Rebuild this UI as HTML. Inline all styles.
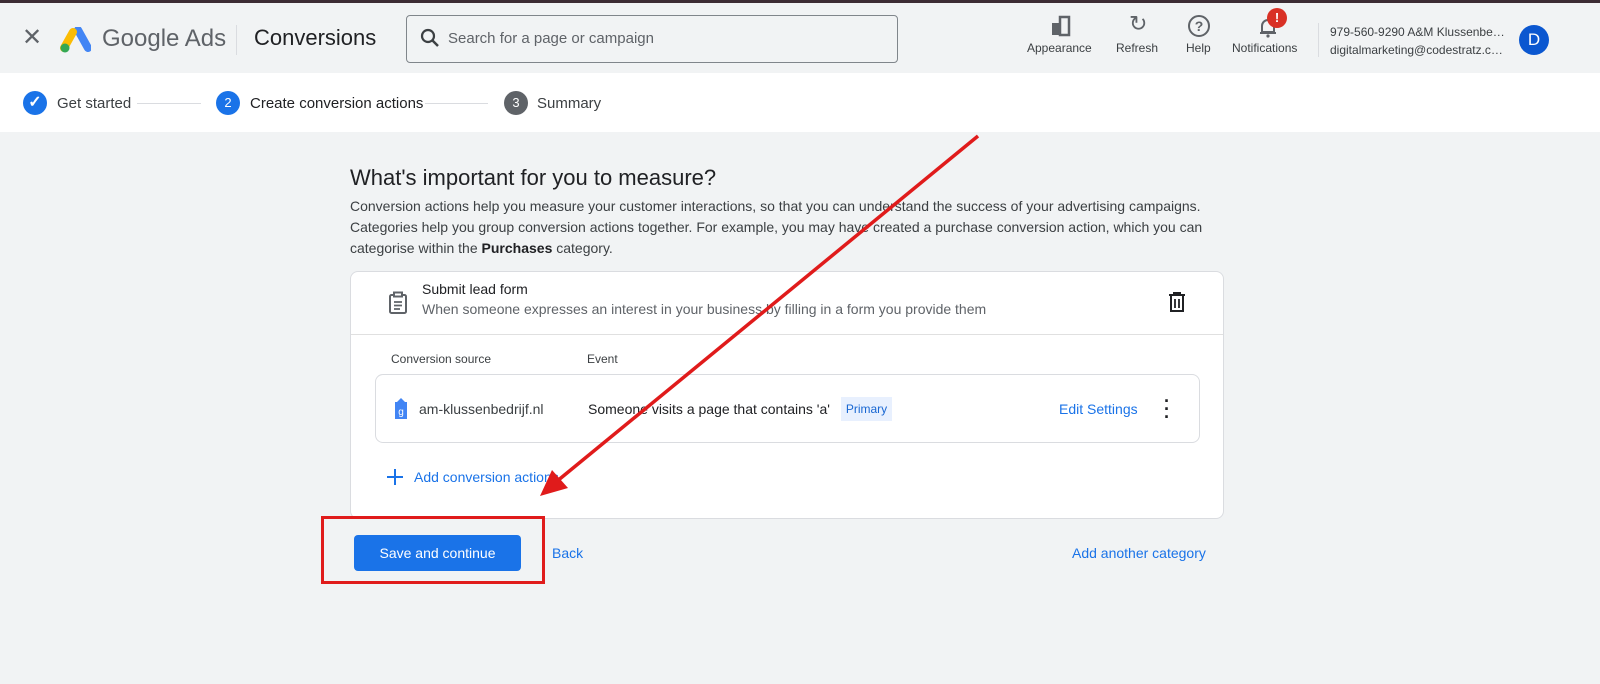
<!DOCTYPE html>
<html><head><meta charset="utf-8"><style>
*{box-sizing:border-box;margin:0;padding:0}
body{width:1600px;height:684px;overflow:hidden;background:#f1f3f4;font-family:"Liberation Sans",Arial,sans-serif;color:#202124;position:relative}
.abs{position:absolute}
.topbar{left:0;top:0;width:1600px;height:3px;background:#3c2c33}
.hdr{left:0;top:3px;width:1600px;height:70px;background:#f1f3f4}
.step{left:0;top:73px;width:1600px;height:59px;background:#fff}
.t{position:absolute;white-space:nowrap}
.hi{font-size:12px;color:#3c4043;text-align:center}
.circ{position:absolute;width:24px;height:24px;border-radius:50%;color:#fff;font-size:13px;text-align:center;line-height:24px}
.card{left:350px;top:271px;width:874px;height:248px;background:#fff;border:1px solid #dadce0;border-radius:8px}
.row{left:375px;top:374px;width:825px;height:69px;border:1px solid #dadce0;border-radius:8px;background:#fff}
.blue{color:#1a73e8}
</style></head><body>
<div class="abs topbar"></div>
<div class="abs hdr">
 <div class="t" style="left:22px;top:20px;font-size:24px;color:#5f6368">✕</div>
 <svg class="abs" style="left:59px;top:24px" width="32" height="28" viewBox="0 0 32 28">
  <path d="M19 3 L29 21" stroke="#4285f4" stroke-width="8" stroke-linecap="round"/>
  <path d="M14 5 L5 21" stroke="#fbbc04" stroke-width="8" stroke-linecap="round"/>
  <circle cx="6" cy="21" r="4.5" fill="#34a853"/>
 </svg>
 <div class="t" style="left:102px;top:22px;font-size:24px;color:#5f6368">Google Ads</div>
 <div class="abs" style="left:236px;top:22px;width:1px;height:30px;background:#dadce0"></div>
 <div class="t" style="left:254px;top:22px;font-size:22px;color:#202124">Conversions</div>
 <div class="abs" style="left:406px;top:12px;width:492px;height:48px;border:1px solid #80868b;border-radius:4px;background:#f1f3f4"></div>
 <svg class="abs" style="left:420px;top:25px" width="20" height="20" viewBox="0 0 20 20"><circle cx="8" cy="8" r="6" stroke="#3c4043" stroke-width="2.2" fill="none"/><path d="M12.5 12.5 L18 18" stroke="#3c4043" stroke-width="2.5"/></svg>
 <div class="t" style="left:448px;top:27px;font-size:15px;color:#5f6368">Search for a page or campaign</div>
 <svg class="abs" style="left:1050px;top:12px" width="22" height="22" viewBox="0 0 22 22"><rect x="2" y="8" width="8" height="12" fill="#5f6368"/><rect x="10" y="2" width="9" height="18" fill="none" stroke="#5f6368" stroke-width="2.5"/></svg>
 <div class="t hi" style="left:1027px;top:38px">Appearance</div>
 <div class="t" style="left:1129px;top:8px;font-size:22px;color:#5f6368">↻</div>
 <div class="t hi" style="left:1116px;top:38px">Refresh</div>
 <div class="abs" style="left:1188px;top:12px;width:22px;height:22px;border:2.2px solid #5f6368;border-radius:50%;font-size:14px;font-weight:bold;color:#5f6368;text-align:center;line-height:18px">?</div>
 <div class="t hi" style="left:1186px;top:38px">Help</div>
 <svg class="abs" style="left:1258px;top:13px" width="20" height="22" viewBox="0 0 20 22"><path d="M4 16 V10 a6 6 0 0 1 12 0 V16 Z" fill="none" stroke="#5f6368" stroke-width="2"/><path d="M2 17 H18" stroke="#5f6368" stroke-width="2"/><circle cx="10" cy="20" r="1.6" fill="#5f6368"/></svg>
 <div class="abs" style="left:1267px;top:5px;width:20px;height:20px;border-radius:50%;background:#d93025;color:#fff;font-size:13px;font-weight:bold;text-align:center;line-height:20px">!</div>
 <div class="t hi" style="left:1232px;top:38px">Notifications</div>
 <div class="abs" style="left:1318px;top:20px;width:1px;height:34px;background:#dadce0"></div>
 <div class="t" style="left:1330px;top:20px;font-size:12px;color:#3c4043;line-height:18px">979-560-9290 A&amp;M Klussenbe…<br>digitalmarketing@codestratz.c…</div>
 <div class="abs" style="left:1519px;top:22px;width:30px;height:30px;border-radius:50%;background:#0b57d0;color:#fff;font-size:17px;text-align:center;line-height:30px">D</div>
</div>
<div class="abs step">
 <div class="circ" style="left:23px;top:18px;background:#1a73e8;font-size:16px;font-weight:bold">✓</div>
 <div class="t" style="left:57px;top:22px;font-size:15px;color:#3c4043">Get started</div>
 <div class="abs" style="left:137px;top:30px;width:64px;height:1px;background:#dadce0"></div>
 <div class="circ" style="left:216px;top:18px;background:#1a73e8">2</div>
 <div class="t" style="left:250px;top:22px;font-size:15px;color:#202124">Create conversion actions</div>
 <div class="abs" style="left:425px;top:30px;width:63px;height:1px;background:#dadce0"></div>
 <div class="circ" style="left:504px;top:18px;background:#5f6368">3</div>
 <div class="t" style="left:537px;top:22px;font-size:15px;color:#3c4043">Summary</div>
</div>
<div class="t" style="left:350px;top:165px;font-size:22px;color:#202124">What's important for you to measure?</div>
<div class="t" style="left:350px;top:196px;font-size:14px;color:#3c4043;line-height:21px">Conversion actions help you measure your customer interactions, so that you can understand the success of your advertising campaigns.<br>Categories help you group conversion actions together. For example, you may have created a purchase conversion action, which you can<br>categorise within the <b style="color:#202124">Purchases</b> category.</div>
<div class="abs card">
 <svg class="abs" style="left:36px;top:19px" width="22" height="24" viewBox="0 0 22 24"><rect x="3" y="4" width="16" height="18" rx="1.5" fill="none" stroke="#5f6368" stroke-width="2"/><rect x="7" y="1.5" width="8" height="4" fill="#fff" stroke="#5f6368" stroke-width="2"/><path d="M7 11H15M7 14.5H15M7 18H13" stroke="#5f6368" stroke-width="1.8"/></svg>
 <div class="t" style="left:71px;top:9px;font-size:14px;color:#202124">Submit lead form</div>
 <div class="t" style="left:71px;top:29px;font-size:14px;color:#5f6368">When someone expresses an interest in your business by filling in a form you provide them</div>
 <svg class="abs" style="left:817px;top:20px" width="18" height="20" viewBox="0 0 18 20"><path d="M1 3H17M6 3V1H12V3" stroke="#202124" stroke-width="2" fill="none"/><path d="M3 4V19H15V4" stroke="#202124" stroke-width="2" fill="none"/><path d="M7 7V16M11 7V16" stroke="#202124" stroke-width="1.8"/></svg>
 <div class="abs" style="left:0;top:62px;width:872px;height:1px;background:#e0e0e0"></div>
 <div class="t" style="left:40px;top:80px;font-size:12px;color:#3c4043">Conversion source</div>
 <div class="t" style="left:236px;top:80px;font-size:12px;color:#3c4043">Event</div>
 <svg class="abs" style="left:35px;top:196px" width="18" height="18" viewBox="0 0 18 18"><path d="M9 1V17M1 9H17" stroke="#1a73e8" stroke-width="2"/></svg>
 <div class="t blue" style="left:63px;top:197px;font-size:14px">Add conversion actions</div>
</div>
<div class="abs row">
 <svg class="abs" style="left:18px;top:23px" width="14" height="22" viewBox="0 0 14 22"><path d="M3 4 L7 0 L11 4 H13 V21 H1 V4Z" fill="#4285f4"/><text x="7" y="17" font-size="10" fill="#fff" text-anchor="middle" font-family="Liberation Sans">g</text></svg>
 <div class="t" style="left:43px;top:26px;font-size:14px;color:#3c4043">am-klussenbedrijf.nl</div>
 <div class="t" style="left:212px;top:26px;font-size:14px;color:#202124">Someone visits a page that contains 'a'</div>
 <div class="abs" style="left:465px;top:22px;width:51px;height:24px;background:#e8f0fe;color:#1967d2;font-size:12px;text-align:center;line-height:24px">Primary</div>
 <div class="t blue" style="left:683px;top:26px;font-size:14px">Edit Settings</div>
 <div class="t" style="left:788px;top:22px;font-size:18px;color:#202124;font-weight:bold;line-height:8px">·<br>·<br>·</div>
</div>
<div class="abs" style="left:354px;top:535px;width:167px;height:36px;background:#1a73e8;border-radius:4px;color:#fff;font-size:14px;text-align:center;line-height:36px">Save and continue</div>
<div class="t blue" style="left:552px;top:545px;font-size:14px">Back</div>
<div class="t blue" style="left:1072px;top:545px;font-size:14px">Add another category</div>
<div class="abs" style="left:321px;top:516px;width:224px;height:68px;border:3px solid #e01b1b"></div>
<svg class="abs" style="left:0;top:0" width="1600" height="684"><line x1="978" y1="136" x2="556" y2="482" stroke="#e01b1b" stroke-width="3.5"/><polygon points="540,496 552,470 568,488" fill="#e01b1b"/></svg>
</body></html>
